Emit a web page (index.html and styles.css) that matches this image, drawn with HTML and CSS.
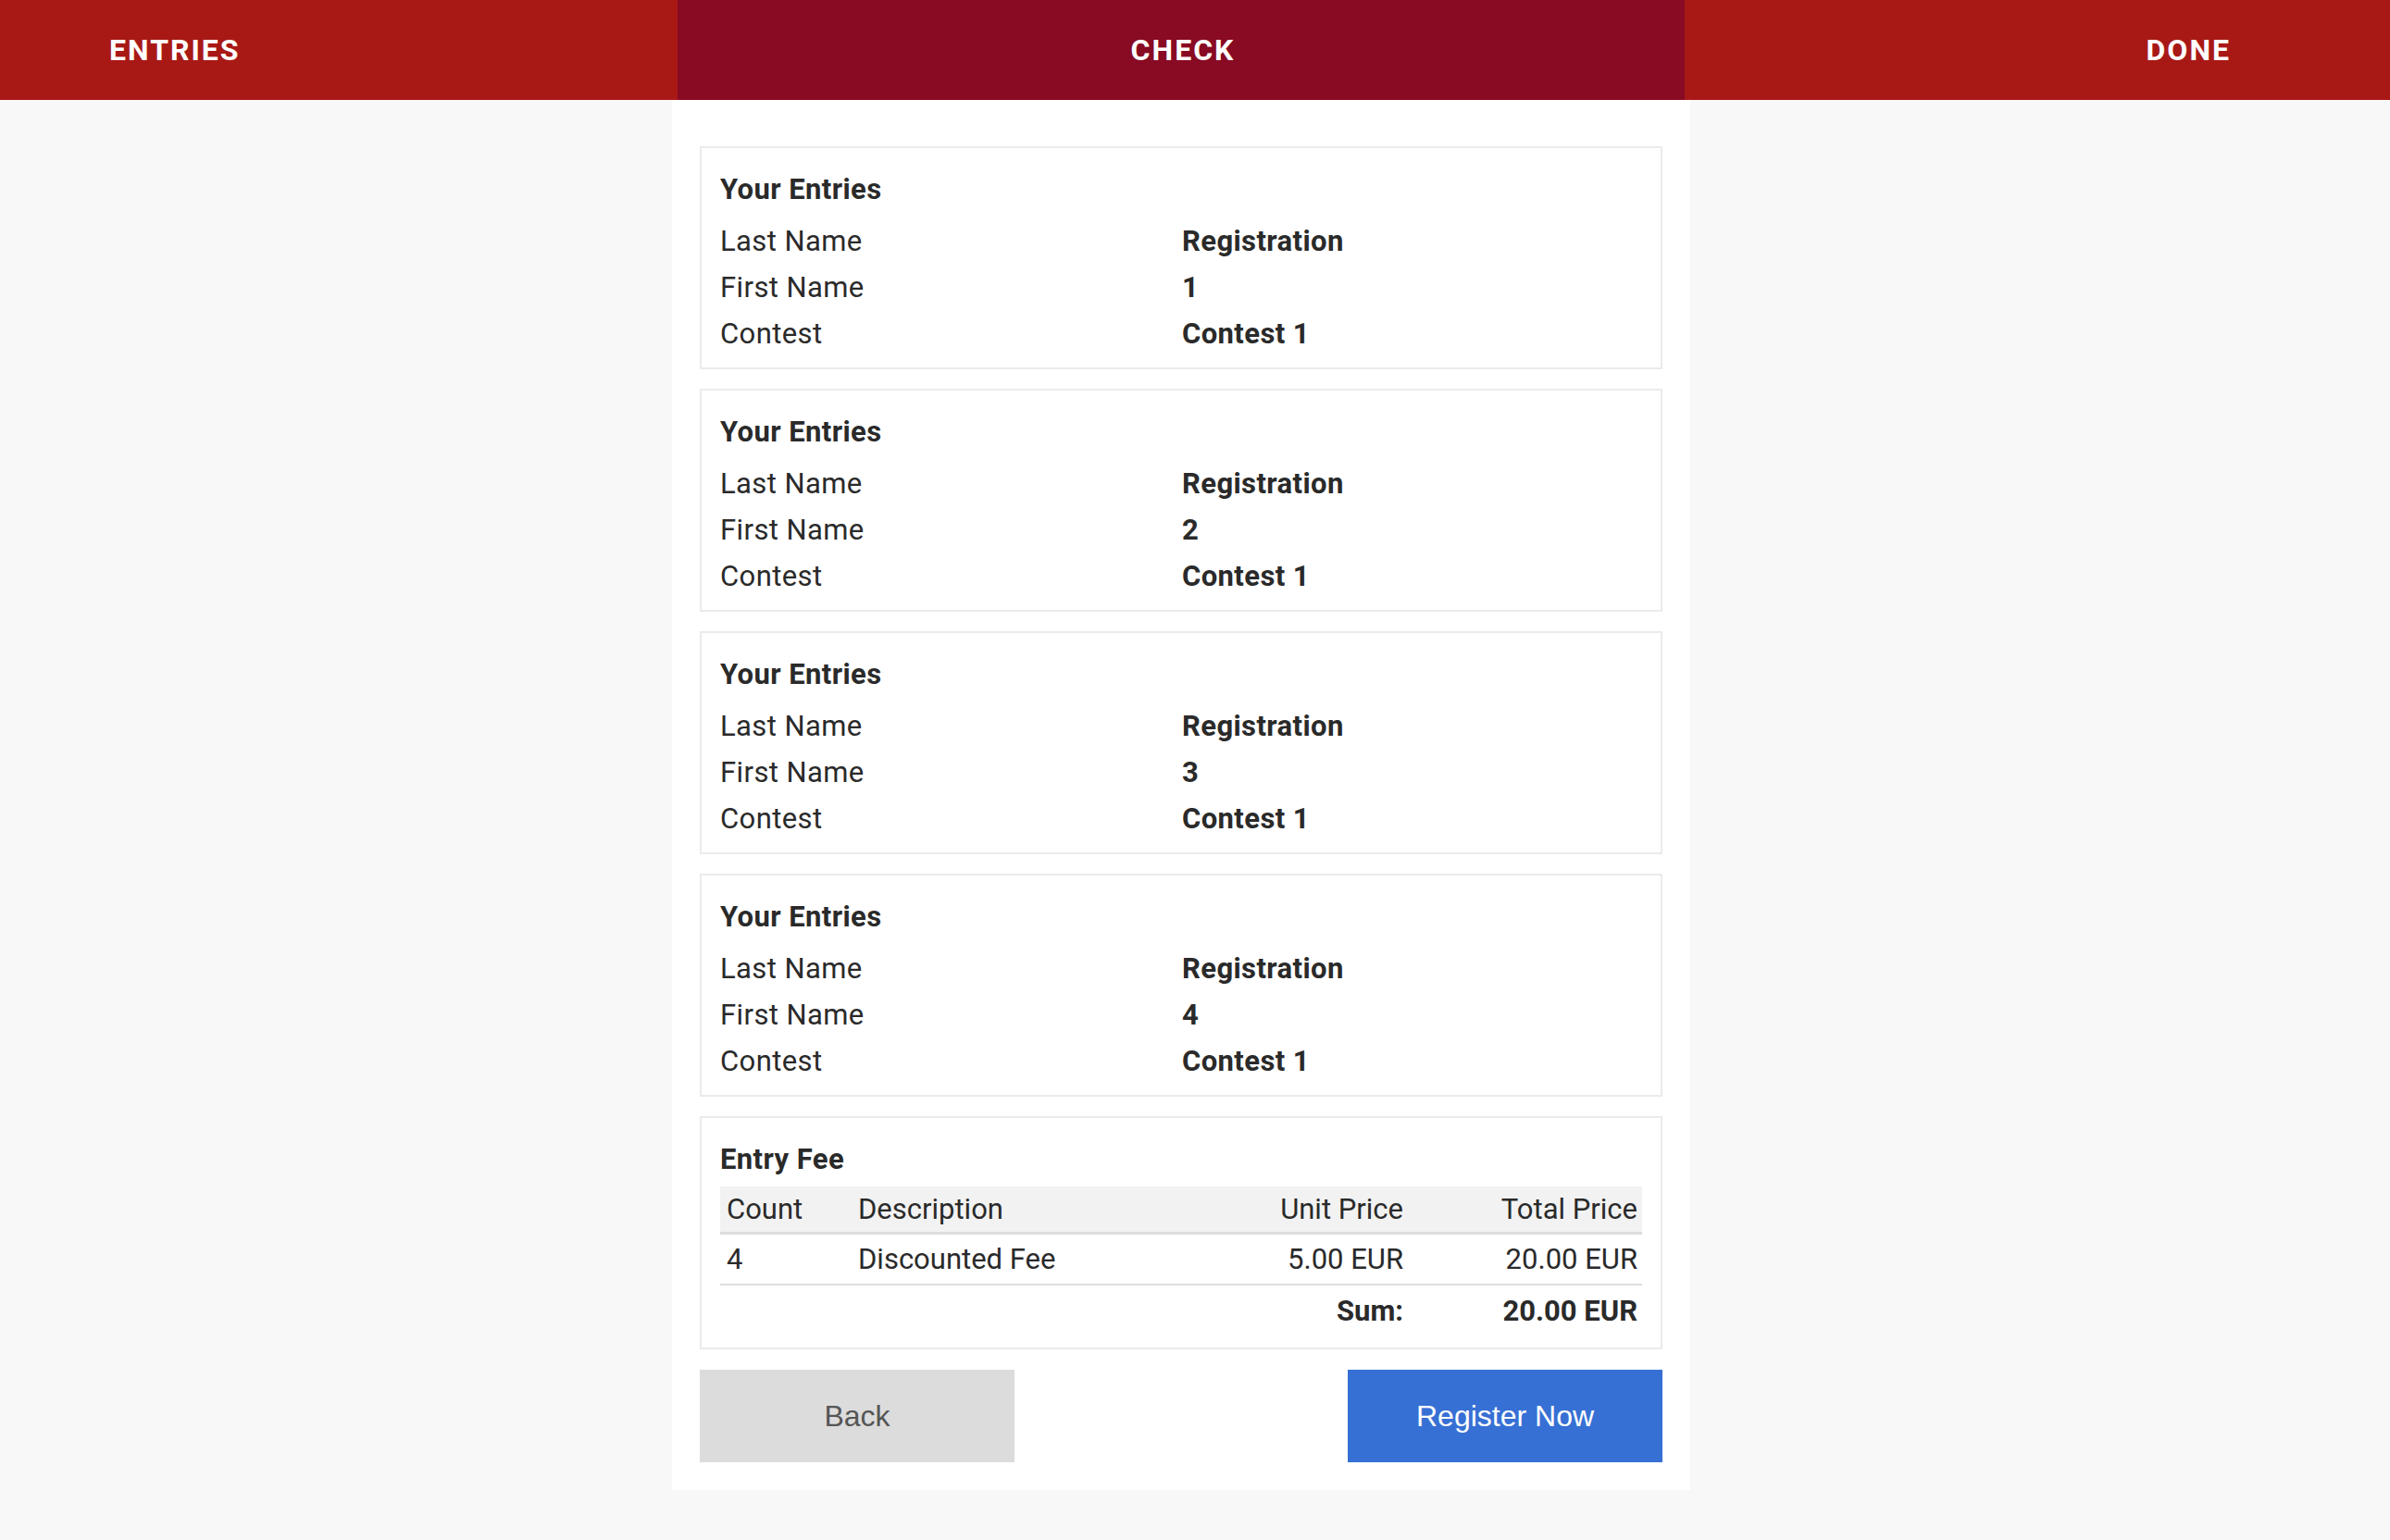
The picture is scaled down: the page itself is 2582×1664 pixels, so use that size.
FILE: index.html
```html
<!DOCTYPE html>
<html lang="en">
<head>
<meta charset="utf-8">
<title>Check</title>
<link rel="stylesheet" href="styles.css">
</head>
<body>
<header class="steps">
  <div class="step step-left">ENTRIES</div>
  <div class="step step-active">CHECK</div>
  <div class="step step-right">DONE</div>
</header>
<main class="panel">
  <section class="card">
    <h2 class="card-title">Your Entries</h2>
    <div class="row"><span class="label">Last Name</span><span class="value">Registration</span></div>
    <div class="row"><span class="label">First Name</span><span class="value">1</span></div>
    <div class="row"><span class="label">Contest</span><span class="value">Contest 1</span></div>
  </section>
  <section class="card">
    <h2 class="card-title">Your Entries</h2>
    <div class="row"><span class="label">Last Name</span><span class="value">Registration</span></div>
    <div class="row"><span class="label">First Name</span><span class="value">2</span></div>
    <div class="row"><span class="label">Contest</span><span class="value">Contest 1</span></div>
  </section>
  <section class="card">
    <h2 class="card-title">Your Entries</h2>
    <div class="row"><span class="label">Last Name</span><span class="value">Registration</span></div>
    <div class="row"><span class="label">First Name</span><span class="value">3</span></div>
    <div class="row"><span class="label">Contest</span><span class="value">Contest 1</span></div>
  </section>
  <section class="card">
    <h2 class="card-title">Your Entries</h2>
    <div class="row"><span class="label">Last Name</span><span class="value">Registration</span></div>
    <div class="row"><span class="label">First Name</span><span class="value">4</span></div>
    <div class="row"><span class="label">Contest</span><span class="value">Contest 1</span></div>
  </section>
  <section class="card card-fee">
    <h2 class="card-title fee-title">Entry Fee</h2>
    <table class="fee-table">
      <colgroup>
        <col class="col-count"><col class="col-desc"><col class="col-unit"><col class="col-total">
      </colgroup>
      <thead>
        <tr><th>Count</th><th>Description</th><th class="num">Unit Price</th><th class="num">Total Price</th></tr>
      </thead>
      <tbody>
        <tr class="item"><td>4</td><td>Discounted Fee</td><td class="num">5.00 EUR</td><td class="num">20.00 EUR</td></tr>
        <tr class="sum"><td></td><td></td><td class="num">Sum:</td><td class="num">20.00 EUR</td></tr>
      </tbody>
    </table>
  </section>
  <div class="actions">
    <button class="btn btn-back">Back</button>
    <button class="btn btn-primary">Register Now</button>
  </div>
</main>
</body>
</html>
```
FILE: styles.css
```css
html, body {
  margin: 0;
  padding: 0;
}
body {
  background: #f8f8f8;
  font-family: Roboto, "Liberation Sans", sans-serif;
  color: #2a2a2a;
  min-height: 1664px;
}
.steps {
  display: grid;
  grid-template-columns: 732px 1088px 1fr;
  height: 108px;
}
.step {
  line-height: 108px;
  font-size: 32px;
  font-weight: 700;
  letter-spacing: 2px;
  color: #ffffff;
  background: #a81916;
}
.step-left {
  padding-left: 118px;
}
.step-active {
  background: #880a23;
  text-align: center;
  padding-left: 4px;
}
.step-right {
  text-align: right;
  padding-right: 172px;
}
.panel {
  width: 1040px;
  margin-left: 726px;
  background: #ffffff;
  padding: 50px 30px 30px;
}
.card {
  border: 2px solid #ebebeb;
  padding: 20px 20px 11px;
  margin-bottom: 21px;
  font-size: 31px;
  letter-spacing: 0.4px;
}
.card-fee {
  padding-top: 20px;
  padding-bottom: 11px;
  margin-bottom: 22px;
}
.card-title {
  margin: 0 0 6px;
  font-size: 31px;
  line-height: 50px;
  font-weight: 700;
}
.fee-title {
  margin-bottom: 4px;
}
.row {
  display: grid;
  grid-template-columns: 499px 1fr;
  line-height: 50px;
}
.value {
  font-weight: 700;
}
.fee-table {
  width: 100%;
  border-collapse: collapse;
  table-layout: fixed;
  font-size: 31px;
  letter-spacing: 0;
}
.col-count { width: 142px; }
.col-unit { width: 200px; }
.col-total { width: 251px; }
.fee-table th,
.fee-table td {
  padding: 0 7px;
  text-align: left;
  font-weight: 400;
  white-space: nowrap;
}
.fee-table th:last-child,
.fee-table td:last-child {
  padding-right: 5px;
}
.fee-table .num {
  text-align: right;
}
.fee-table thead tr {
  background: #f2f2f2;
  border-bottom: 3px solid #dddddd;
}
.fee-table thead th {
  height: 49px;
  line-height: 49px;
}
.fee-table .item {
  border-bottom: 2px solid #dddddd;
}
.fee-table .item td {
  height: 53px;
  line-height: 53px;
}
.fee-table .sum td {
  height: 56px;
  line-height: 56px;
  font-weight: 700;
}
.actions {
  display: flex;
  justify-content: space-between;
}
.btn {
  width: 340px;
  height: 100px;
  border: none;
  padding: 0;
  font-family: "Liberation Sans", Arial, sans-serif;
  font-size: 32px;
  cursor: pointer;
}
.btn-back {
  background: #dcdcdc;
  color: #555555;
}
.btn-primary {
  background: #3770d4;
  color: #ffffff;
}
```
